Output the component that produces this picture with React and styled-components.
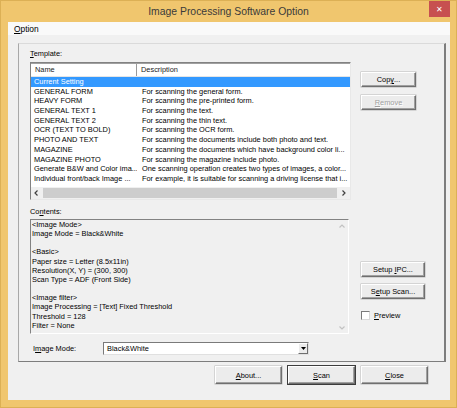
import React from 'react';
import styled, { createGlobalStyle } from 'styled-components';

const GlobalStyle = createGlobalStyle`
  html, body {
    margin: 0;
    padding: 0;
    background: #ffffff;
  }
  body {
    font-family: "Liberation Sans", Arial, sans-serif;
    overflow: hidden;
  }
  * {
    box-sizing: border-box;
  }
`;

const Window = styled.div`
  width: 457px;
  height: 408px;
  background: #f0c66e;
  border: 1px solid #dcb055;
  display: flex;
  flex-direction: column;
`;

const TitleBar = styled.div`
  height: 21px;
  display: grid;
  grid-template-columns: 1fr auto 1fr;
  align-items: start;
`;

const Title = styled.div`
  grid-column: 2;
  line-height: 22px;
  font-size: 10.4px;
  color: #3a3a3a;
  white-space: nowrap;
`;

const CloseButton = styled.div`
  grid-column: 3;
  justify-self: end;
  margin-right: 6px;
  width: 21px;
  height: 16px;
  background: #c75050;
  color: #ffffff;
  font-size: 8px;
  display: flex;
  align-items: center;
  justify-content: center;
`;

const Client = styled.div`
  flex: 1;
  margin: 0 6px 7px 7px;
  background: #f0f0f0;
  display: flex;
  flex-direction: column;
`;

const MenuBar = styled.div`
  height: 13px;
  background: #f9f9f9;
  padding: 1px 0 0 6px;
  font-size: 8.4px;
  line-height: 12px;
  color: #000000;
`;

const Body = styled.div`
  flex: 1;
  padding: 8px 4px 0 10px;
  display: flex;
  flex-direction: column;
`;

const Panel = styled.div`
  height: 319px;
  border-style: solid;
  border-width: 1px 2px 1px 1px;
  border-color: #dadada #7d7d7d #7d7d7d #a8a8a8;
  padding: 5px 0 0 11px;
  display: flex;
  flex-direction: column;
  font-size: 7.4px;
  color: #000000;
`;

const Section = styled.div`
  display: flex;
  gap: ${({ $gap }) => $gap}px;
  margin-top: ${({ $top }) => $top || 0}px;
`;

const Column = styled.div`
  width: ${({ $width }) => $width}px;
  display: flex;
  flex-direction: column;
`;

const Label = styled.div`
  height: 10px;
  line-height: 10px;
  margin-bottom: ${({ $below }) => $below}px;
  white-space: nowrap;
`;

const U = styled.span`
  text-decoration: underline;
  text-underline-offset: 1px;
`;

const ListView = styled.div`
  height: 138px;
  background: #ffffff;
  border: 1px solid;
  border-color: #828282 #e8e8e8 #e8e8e8 #828282;
  display: flex;
  flex-direction: column;
`;

const ListHeader = styled.div`
  height: 14px;
  display: grid;
  grid-template-columns: 106px 1fr;
  border-top: 1px solid #a0a0a0;
  border-bottom: 1px solid #e5e5e5;
  line-height: 12px;
  color: #222222;
`;

const HeaderCell = styled.div`
  padding-left: ${({ $pad }) => $pad}px;
  border-right: ${({ $divider }) => ($divider ? '1px solid #9a9a9a' : 'none')};
`;

const Rows = styled.div`
  flex: 1;
  overflow: hidden;
`;

const Row = styled.div`
  height: 9.7px;
  line-height: 9.7px;
  display: grid;
  grid-template-columns: 106px 1fr;
  white-space: nowrap;
  background: ${({ $selected }) => ($selected ? '#3399ff' : 'transparent')};
  color: ${({ $selected }) => ($selected ? '#ffffff' : '#000000')};
`;

const Cell = styled.div`
  padding-left: ${({ $pad }) => $pad}px;
  overflow: hidden;
`;

const HScroll = styled.div`
  height: 12px;
  background: #f0f0f0;
  display: flex;
  align-items: center;
`;

const ArrowBox = styled.div`
  width: ${({ $size }) => $size}px;
  height: ${({ $size }) => $size}px;
  display: flex;
  align-items: center;
  justify-content: center;
  color: ${({ $disabled }) => ($disabled ? '#c2c2c2' : '#404040')};
`;

const Thumb = styled.div`
  flex: 1;
  height: 10px;
  margin-right: 1px;
  background: #cdcdcd;
`;

const ContentsBox = styled.div`
  height: 115px;
  background: #f0f0f0;
  border: 1px solid;
  border-color: #828282 #ffffff #ffffff #828282;
  display: flex;
`;

const ContentsText = styled.div`
  flex: 1;
  padding-left: 1px;
  line-height: 9.15px;
  white-space: pre;
  overflow: hidden;
`;

const VScroll = styled.div`
  width: 11px;
  display: flex;
  flex-direction: column;
  justify-content: space-between;
  padding: 2px 0 1px;
`;

const SideStack = styled.div`
  display: flex;
  flex-direction: column;
  gap: ${({ $gap }) => $gap}px;
  padding-top: ${({ $top }) => $top}px;
`;

const Button = styled.div`
  width: ${({ $width }) => $width}px;
  height: ${({ $height }) => $height}px;
  background: #ececec;
  border: 1px solid;
  border-color: #ffffff #6f6f6f #6f6f6f #ffffff;
  box-shadow: ${({ $default }) =>
    $default
      ? '0 0 0 1px #3c3c3c, inset -1px -1px 0 #a0a0a0'
      : 'inset -1px -1px 0 #a0a0a0, 0 0 0 0.5px #b8b8b8'};
  display: flex;
  align-items: center;
  justify-content: center;
  font-size: 7.4px;
  color: ${({ $disabled }) => ($disabled ? '#a0a0a0' : '#000000')};
  text-shadow: ${({ $disabled }) => ($disabled ? '1px 1px 0 #ffffff' : 'none')};
  white-space: pre;
`;

const CheckRow = styled.div`
  display: flex;
  align-items: center;
  gap: 4px;
  margin-top: 4px;
  height: 11px;
`;

const CheckBox = styled.div`
  width: 9px;
  height: 9px;
  background: #ffffff;
  border: 1px solid;
  border-color: #7a7a7a #d8d8d8 #d8d8d8 #7a7a7a;
`;

const ModeRow = styled.div`
  display: flex;
  align-items: center;
  margin-top: 8px;
`;

const ModeLabel = styled.div`
  width: 73px;
  padding-left: 3px;
  white-space: nowrap;
`;

const Select = styled.div`
  width: 206px;
  height: 13px;
  background: #ffffff;
  border: 1px solid;
  border-color: #7a7a7a #e0e0e0 #e0e0e0 #7a7a7a;
  display: flex;
  align-items: stretch;
`;

const SelectValue = styled.div`
  flex: 1;
  padding-left: 3px;
  line-height: 11px;
`;

const DropButton = styled.div`
  width: 10px;
  background: #ececec;
  border: 1px solid;
  border-color: #ffffff #6f6f6f #6f6f6f #ffffff;
  display: flex;
  align-items: center;
  justify-content: center;
`;

const Footer = styled.div`
  display: flex;
  justify-content: flex-end;
  gap: 6px;
  margin-top: 4px;
  padding-right: 18px;
`;

const Chevron = ({ dir }) => {
  const paths = {
    left: 'M3.5 0.5 L1 3 L3.5 5.5',
    right: 'M1.5 0.5 L4 3 L1.5 5.5',
    up: 'M0.5 3.5 L3 1 L5.5 3.5',
    down: 'M0.5 1.5 L3 4 L5.5 1.5',
  };
  return (
    <svg width="6" height="6" viewBox="0 0 6 6">
      <path d={paths[dir]} fill="none" stroke="currentColor" strokeWidth="1.2" />
    </svg>
  );
};

const templates = [
  ['Current Setting', ''],
  ['GENERAL FORM', 'For scanning the general form.'],
  ['HEAVY FORM', 'For scanning the pre-printed form.'],
  ['GENERAL TEXT 1', 'For scanning the text.'],
  ['GENERAL TEXT 2', 'For scanning the thin text.'],
  ['OCR (TEXT TO BOLD)', 'For scanning the OCR form.'],
  ['PHOTO AND TEXT', 'For scanning the documents include both photo and text.'],
  ['MAGAZINE', 'For scanning the documents which have background color li...'],
  ['MAGAZINE PHOTO', 'For scanning the magazine include photo.'],
  ['Generate B&W and Color ima...', 'One scanning operation creates two types of images, a color...'],
  ['Individual front/back Image ...', 'For example, it is suitable for scanning a driving license that i...'],
];

const contents = `<Image Mode>
Image Mode = Black&White

<Basic>
Paper size = Letter (8.5x11in)
Resolution(X, Y) = (300, 300)
Scan Type = ADF (Front Side)

<Image filter>
Image Processing = [Text] Fixed Threshold
Threshold = 128
Filter = None`;

export default function App() {
  return (
    <>
      <GlobalStyle />
      <Window>
        <TitleBar>
          <Title>Image Processing Software Option</Title>
          <CloseButton>✕</CloseButton>
        </TitleBar>
        <Client>
          <MenuBar>
            <U>O</U>ption
          </MenuBar>
          <Body>
            <Panel>
              <Section $gap={10}>
                <Column $width={321}>
                  <Label $below={3}>
                    <U>T</U>emplate:
                  </Label>
                  <ListView>
                    <ListHeader>
                      <HeaderCell $pad={4} $divider>Name</HeaderCell>
                      <HeaderCell $pad={4}>Description</HeaderCell>
                    </ListHeader>
                    <Rows>
                      {templates.map(([name, desc], i) => (
                        <Row key={name} $selected={i === 0}>
                          <Cell $pad={3}>{name}</Cell>
                          <Cell $pad={5}>{desc}</Cell>
                        </Row>
                      ))}
                    </Rows>
                    <HScroll>
                      <ArrowBox $size={12}>
                        <Chevron dir="left" />
                      </ArrowBox>
                      <Thumb />
                      <ArrowBox $size={12}>
                        <Chevron dir="right" />
                      </ArrowBox>
                    </HScroll>
                  </ListView>
                </Column>
                <SideStack $top={23} $gap={8}>
                  <Button $width={55} $height={15}>
                    Cop<U>y</U>...
                  </Button>
                  <Button $width={55} $height={15} $disabled>
                    <U>R</U>emove
                  </Button>
                </SideStack>
              </Section>

              <Section $gap={12} $top={7}>
                <Column $width={319}>
                  <Label $below={2}>
                    Co<U>n</U>tents:
                  </Label>
                  <ContentsBox>
                    <ContentsText>{contents}</ContentsText>
                    <VScroll>
                      <ArrowBox $size={9} $disabled>
                        <Chevron dir="up" />
                      </ArrowBox>
                      <ArrowBox $size={9} $disabled>
                        <Chevron dir="down" />
                      </ArrowBox>
                    </VScroll>
                  </ContentsBox>
                </Column>
                <SideStack $top={55} $gap={7}>
                  <Button $width={64} $height={15}>
                    {'Setup '}<U>I</U>PC...
                  </Button>
                  <Button $width={64} $height={15}>
                    S<U>e</U>tup Scan...
                  </Button>
                  <CheckRow>
                    <CheckBox />
                    <span>
                      <U>P</U>review
                    </span>
                  </CheckRow>
                </SideStack>
              </Section>

              <ModeRow>
                <ModeLabel>
                  I<U>m</U>age Mode:
                </ModeLabel>
                <Select>
                  <SelectValue>Black&amp;White</SelectValue>
                  <DropButton>
                    <svg width="5" height="3" viewBox="0 0 5 3">
                      <path d="M0 0 H5 L2.5 3 Z" fill="#000" />
                    </svg>
                  </DropButton>
                </Select>
              </ModeRow>
            </Panel>

            <Footer>
              <Button $width={67} $height={18}>
                <U>A</U>bout...
              </Button>
              <Button $width={67} $height={18} $default>
                <U>S</U>can
              </Button>
              <Button $width={67} $height={18}>
                <U>C</U>lose
              </Button>
            </Footer>
          </Body>
        </Client>
      </Window>
    </>
  );
}
